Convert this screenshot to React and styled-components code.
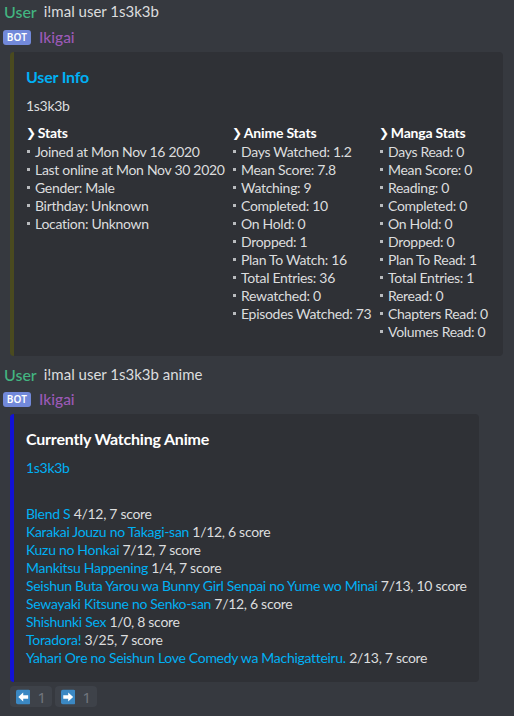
import React from "react";
import styled, { createGlobalStyle } from "styled-components";

const GlobalStyle = createGlobalStyle`
  html, body {
    margin: 0;
    padding: 0;
    background: #36393f;
  }
  body {
    font-family: Lato, "Noto Sans", sans-serif;
    color: #dcddde;
    -webkit-font-smoothing: antialiased;
  }
`;

const Page = styled.div`
  display: flex;
  flex-direction: column;
  padding: 0 0 0 3px;
  width: 514px;
  box-sizing: border-box;
`;

const Message = styled.div`
  display: flex;
  flex-direction: column;
  margin-bottom: ${(p) => p.$gap || 0}px;
`;

const HeaderRow = styled.div`
  display: flex;
  align-items: center;
  height: 22px;
  gap: 7px;
  font-size: 15px;
  margin-bottom: ${(p) => p.$mb || 0}px;
`;

const UserName = styled.span`
  color: #43b581;
  font-size: 16px;
  font-weight: 500;
  padding-left: 1px;
`;

const Content = styled.span`
  color: #dcddde;
`;

const BotBadge = styled.span`
  display: inline-flex;
  align-items: center;
  justify-content: center;
  width: 28px;
  height: 15px;
  border-radius: 3px;
  background: #7289da;
  color: #fff;
  font-size: 10px;
  font-weight: 600;
  font-family: "Noto Sans", sans-serif;
  letter-spacing: 0.2px;
`;

const BotName = styled.span`
  color: #9b59b6;
  font-size: 15.5px;
  font-weight: 500;
  margin-left: 1px;
`;

const Embed = styled.div`
  margin-left: 7px;
  width: ${(p) => p.$width}px;
  box-sizing: border-box;
  background: #2f3136;
  border-left: 4px solid ${(p) => p.$color};
  border-radius: 4px;
  padding: 8px 16px 15px 12px;
  display: flex;
  flex-direction: column;
`;

const EmbedTitle = styled.div`
  margin-top: 7px;
  font-size: 16px;
  line-height: 20px;
  font-weight: 700;
  letter-spacing: -0.2px;
  color: ${(p) => p.$color};
  white-space: nowrap;
`;

const Description = styled.div`
  margin-top: 10px;
  font-size: 14px;
  line-height: 18px;
  letter-spacing: -0.3px;
  color: ${(p) => p.$color || "#dcddde"};
`;

const FieldGrid = styled.div`
  margin-top: 9px;
  display: grid;
  grid-template-columns: ${(p) => p.$cols};
  column-gap: 8px;
  align-items: start;
`;

const Field = styled.div`
  display: flex;
  flex-direction: column;
  min-width: 0;
`;

const FieldName = styled.div`
  height: 18px;
  font-size: 14px;
  line-height: 18px;
  font-weight: 700;
  letter-spacing: -0.2px;
  color: #ffffff;
  margin-bottom: 1px;
  white-space: nowrap;
  display: flex;
  align-items: center;
`;

const Chevron = styled.span`
  font-family: "DejaVu Sans", sans-serif;
  font-weight: 700;
  font-size: 12px;
  line-height: 1;
  margin-right: 2px;
`;

const Line = styled.div`
  font-size: 14px;
  line-height: 18px;
  letter-spacing: -0.3px;
  color: #dcddde;
  white-space: nowrap;
`;

const Bullet = styled.span`
  display: inline-block;
  width: 3px;
  height: 3px;
  background: #b9bbbe;
  margin: 0 5px 3px 1px;
  vertical-align: middle;
`;

const Link = styled.span`
  color: #00b0f4;
`;

const ButtonRow = styled.div`
  display: flex;
  gap: 3px;
  margin: 4px 0 0 7px;
`;

const NavButton = styled.div`
  display: flex;
  align-items: center;
  gap: 7px;
  height: 21px;
  width: 42px;
  box-sizing: border-box;
  padding: 0 6px;
  border-radius: 4px;
  background: #3e4249;
`;

const Count = styled.span`
  color: #72767d;
  font-size: 15px;
  line-height: 18px;
  font-family: "Noto Sans", sans-serif;
`;

const ArrowIcon = ({ dir }) => (
  <svg width="16" height="16" viewBox="0 0 16 16">
    <rect x="0" y="0" width="16" height="16" rx="2" fill="#3b88c3" />
    {dir === "left" ? (
      <path d="M2.5 8 L8 3 L8 6 L13.5 6 L13.5 10 L8 10 L8 13 Z" fill="#ffffff" />
    ) : (
      <path d="M13.5 8 L8 3 L8 6 L2.5 6 L2.5 10 L8 10 L8 13 Z" fill="#ffffff" />
    )}
  </svg>
);

const stats = [
  {
    name: "Stats",
    lines: [
      "Joined at Mon Nov 16 2020",
      "Last online at Mon Nov 30 2020",
      "Gender: Male",
      "Birthday: Unknown",
      "Location: Unknown",
    ],
  },
  {
    name: "Anime Stats",
    lines: [
      "Days Watched: 1.2",
      "Mean Score: 7.8",
      "Watching: 9",
      "Completed: 10",
      "On Hold: 0",
      "Dropped: 1",
      "Plan To Watch: 16",
      "Total Entries: 36",
      "Rewatched: 0",
      "Episodes Watched: 73",
    ],
  },
  {
    name: "Manga Stats",
    lines: [
      "Days Read: 0",
      "Mean Score: 0",
      "Reading: 0",
      "Completed: 0",
      "On Hold: 0",
      "Dropped: 0",
      "Plan To Read: 1",
      "Total Entries: 1",
      "Reread: 0",
      "Chapters Read: 0",
      "Volumes Read: 0",
    ],
  },
];

const anime = [
  ["Blend S", "4/12, 7 score"],
  ["Karakai Jouzu no Takagi-san", "1/12, 6 score"],
  ["Kuzu no Honkai", "7/12, 7 score"],
  ["Mankitsu Happening", "1/4, 7 score"],
  ["Seishun Buta Yarou wa Bunny Girl Senpai no Yume wo Minai", "7/13, 10 score"],
  ["Sewayaki Kitsune no Senko-san", "7/12, 6 score"],
  ["Shishunki Sex", "1/0, 8 score"],
  ["Toradora!", "3/25, 7 score"],
  ["Yahari Ore no Seishun Love Comedy wa Machigatteiru.", "2/13, 7 score"],
];

export default function App() {
  return (
    <>
      <GlobalStyle />
      <Page>
        <Message $gap={7}>
          <HeaderRow $mb={4}>
            <UserName>User</UserName>
            <Content>i!mal user 1s3k3b</Content>
          </HeaderRow>
          <HeaderRow $mb={4}>
            <BotBadge>BOT</BotBadge>
            <BotName>Ikigai</BotName>
          </HeaderRow>
          <Embed $width={493} $color="#4a4a1f">
            <EmbedTitle $color="#00b0f4">User Info</EmbedTitle>
            <Description>1s3k3b</Description>
            <FieldGrid $cols="198px 139px auto">
              {stats.map((f) => (
                <Field key={f.name}>
                  <FieldName>
                    <Chevron>❯</Chevron>
                    {f.name}
                  </FieldName>
                  {f.lines.map((l) => (
                    <Line key={l}>
                      <Bullet />
                      {l}
                    </Line>
                  ))}
                </Field>
              ))}
            </FieldGrid>
          </Embed>
        </Message>
        <Message>
          <HeaderRow $mb={3}>
            <UserName>User</UserName>
            <Content>i!mal user 1s3k3b anime</Content>
          </HeaderRow>
          <HeaderRow $mb={4}>
            <BotBadge>BOT</BotBadge>
            <BotName>Ikigai</BotName>
          </HeaderRow>
          <Embed $width={469} $color="#1212d6">
            <EmbedTitle $color="#ffffff">Currently Watching Anime</EmbedTitle>
            <Description $color="#00b0f4">1s3k3b</Description>
            <FieldGrid $cols="1fr">
              <Field>
                <FieldName aria-hidden="true" />
                {anime.map(([t, s]) => (
                  <Line key={t}>
                    <Link>{t}</Link> {s}
                  </Line>
                ))}
              </Field>
            </FieldGrid>
          </Embed>
          <ButtonRow>
            <NavButton>
              <ArrowIcon dir="left" />
              <Count>1</Count>
            </NavButton>
            <NavButton>
              <ArrowIcon dir="right" />
              <Count>1</Count>
            </NavButton>
          </ButtonRow>
        </Message>
      </Page>
    </>
  );
}
